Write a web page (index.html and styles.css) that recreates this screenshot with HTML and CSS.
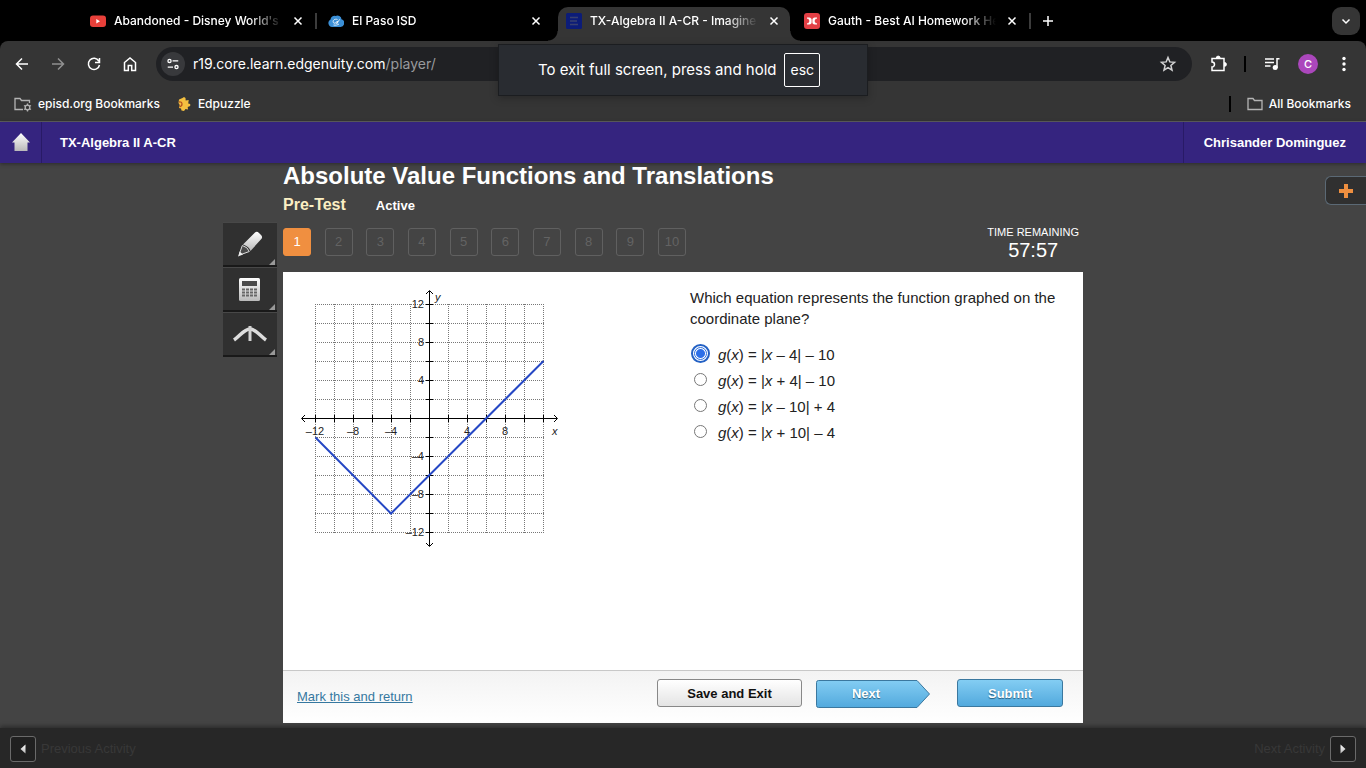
FILE: index.html
```html
<!DOCTYPE html>
<html lang="en">
<head>
<meta charset="utf-8">
<meta name="viewport" content="width=device-width, initial-scale=1">
<title>TX-Algebra II A-CR - Imagine Edgenuity</title>
<link rel="stylesheet" href="styles.css">
</head>
<body>
<header class="browser">
  <div class="tabs">
    <div class="tab tab-divided">
      <svg class="fav" viewBox="0 0 16 16"><rect y="2.500" width="16" height="11.500" rx="3" fill="#e8403a"/><path d="M6.300 6v4.600L10 8.300z" fill="#fff"/></svg>
      <span class="tab-title">Abandoned - Disney World's 2</span>
      <button class="tab-close" aria-label="Close tab"><svg viewBox="0 0 16 16"><path d="M4.500 4.500l7 7M11.500 4.500l-7 7"/></svg></button>
    </div>
    <div class="tab">
      <svg class="fav" viewBox="0 0 16 16"><path d="M4 14a4 4 0 0 1-1.500-7.500A4 4 0 0 1 7.500 3a4 4 0 0 1 6 3.200A4 4 0 0 1 12.500 14z" fill="#3b8fd6"/><path d="M9.500 6.500c-3-1-5 1-4.200 3 .6 1.400 2.700.8 4.200-1.500l-.8 2.800 3-4.500M5.500 12c2 .5 4 0 5.500-1" fill="none" stroke="#fff" stroke-width=".8"/></svg>
      <span class="tab-title">El Paso ISD</span>
      <button class="tab-close" aria-label="Close tab"><svg viewBox="0 0 16 16"><path d="M4.500 4.500l7 7M11.500 4.500l-7 7"/></svg></button>
    </div>
    <div class="tab tab-active">
      <svg class="fav" viewBox="0 0 16 16"><rect width="16" height="16" rx="1.500" fill="#0c1c78"/><path d="M4 4.500h8M4 8h7M4 11.500h8" fill="none" stroke="#39406f" stroke-width="1.500"/></svg>
      <span class="tab-title">TX-Algebra II A-CR - Imagine</span>
      <button class="tab-close" aria-label="Close tab"><svg viewBox="0 0 16 16"><path d="M4.500 4.500l7 7M11.500 4.500l-7 7"/></svg></button>
    </div>
    <div class="tab tab-divided">
      <svg class="fav" viewBox="0 0 16 16"><rect width="16" height="16" rx="3" fill="#e33f45"/><path d="M3 4.500h2.200C7 4.500 7.400 6.300 8 6.300s1-1.800 2.800-1.800H13v1.300h-1.300L10.500 8l1.200 2.200H13v1.300h-2.200C9 11.500 8.600 9.700 8 9.700s-1 1.800-2.800 1.800H3v-1.300h1.300L5.500 8 4.300 5.800H3z" fill="#fff"/><path d="M8 6v4" stroke="#e33f45" stroke-width=".8"/></svg>
      <span class="tab-title">Gauth - Best AI Homework He</span>
      <button class="tab-close" aria-label="Close tab"><svg viewBox="0 0 16 16"><path d="M4.500 4.500l7 7M11.500 4.500l-7 7"/></svg></button>
    </div>
    <button class="new-tab" aria-label="New tab"><svg viewBox="0 0 16 16"><path d="M8 3v10M3 8h10"/></svg></button>
    <button class="tab-search" aria-label="Search tabs"><svg viewBox="0 0 16 16"><path d="M4.500 6.500L8 10l3.500-3.500"/></svg></button>
  </div>

  <div class="toolbar">
    <button class="tool" aria-label="Back"><svg viewBox="0 0 20 20"><path d="M16 10H5M10 4.500L4.500 10l5.500 5.500"/></svg></button>
    <button class="tool tool-off" aria-label="Forward"><svg viewBox="0 0 20 20"><path d="M4 10h11M10 4.500l5.500 5.500-5.500 5.500"/></svg></button>
    <button class="tool" aria-label="Reload"><svg viewBox="0 0 20 20"><path d="M14.800 7A5.600 5.600 0 1 0 15.500 11M15.500 4v4.500H11"/></svg></button>
    <button class="tool" aria-label="Home"><svg viewBox="0 0 20 20"><path d="M4.500 8.500L10 4l5.500 4.500v8h-3.800v-5H8.300v5H4.500z"/></svg></button>
    <div class="address">
      <span class="site-info"><svg viewBox="0 0 16 16"><circle cx="4" cy="4.500" r="1.800"/><path d="M7.500 4.500H14M2 11.500h6"/><circle cx="12" cy="11.500" r="1.800"/></svg></span>
      <span class="url">r19.core.learn.edgenuity.com<span class="url-path">/player/</span></span>
      <button class="tool star" aria-label="Bookmark this tab"><svg viewBox="0 0 20 20"><path d="M10 3.500l1.800 4.400 4.700.4-3.600 3.100 1.100 4.700L10 13.600l-4 2.500 1.100-4.700-3.600-3.100 4.700-.4z"/></svg></button>
    </div>
    <button class="tool" aria-label="Extensions"><svg viewBox="0 0 20 20"><path d="M4 4.500h12v12H4v-3.500a2.300 2.300 0 0 0 0-5z"/><path d="M8.300 4a1.900 1.900 0 0 1 3.800 0zM16.500 8.500a1.900 1.900 0 0 1 0 3.800z" fill="#fff" stroke-width="1"/></svg></button>
    <span class="bar-divider"></span>
    <button class="tool" aria-label="Media controls"><svg viewBox="0 0 20 20"><path d="M3 5h9M3 8.500h9M3 12h5.500M15 14V4.800h2.500"/><circle cx="13.200" cy="13.500" r="2.500" fill="#fff" stroke="none"/></svg></button>
    <button class="avatar" aria-label="Profile">C</button>
    <button class="tool" aria-label="Menu"><svg viewBox="0 0 20 20"><g fill="#fff" stroke="none"><circle cx="10" cy="4.500" r="1.700"/><circle cx="10" cy="10" r="1.700"/><circle cx="10" cy="15.500" r="1.700"/></g></svg></button>
  </div>

  <nav class="bookmarks">
    <a class="bookmark" href="#"><svg class="folder-set" viewBox="0 0 18 16"><path d="M9 13.500H1v-11h5l1.500 2h8V7"/><circle cx="13.500" cy="11.500" r="2.300"/><path d="M13.500 7.500v1.700M13.500 13.800v1.700M10 9.500l1.500.8M15.500 12.700l1.500.8M10 13.500l1.500-.8M15.500 10.300l1.500-.8"/></svg>episd.org Bookmarks</a>
    <a class="bookmark" href="#"><svg class="puzzle" viewBox="0 0 16 16"><path d="M3 3.500L6.500 2 8 1l1.500 1 .2 2.500 3-.5-.5 3.500 2 .5v2l-2.500 1 .3 2.500-2.500-.5L8 15l-2.500-.5L5 12.500l-2-.5.700-3L2.500 7z" fill="#f4c040"/><path d="M3 6q3-.5 3 2t-2.500 2.500" fill="none" stroke="#b5531d" stroke-width="1.300"/></svg>Edpuzzle</a>
    <span class="bar-divider bar-divider-end"></span>
    <a class="bookmark" href="#"><svg class="folder" viewBox="0 0 16 16"><path d="M1 2.500h5l1.500 2H15v9H1z"/></svg>All Bookmarks</a>
  </nav>
  <div class="toast" role="status">To exit full screen, press and hold <kbd class="key">esc</kbd></div>
</header>

<div class="appbar">
  <a class="app-home" href="#" aria-label="Home"><svg viewBox="0 0 18 20"><defs><linearGradient id="silver" x2="0" y2="1"><stop stop-color="#fff"/><stop offset="1" stop-color="#b9b9b9"/></linearGradient></defs><path d="M9 0l9 9.500h-2.500V18h-13V9.500H0z" fill="url(#silver)"/></svg></a>
  <span class="app-course">TX-Algebra II A-CR</span>
  <a class="app-user" href="#">Chrisander Dominguez</a>
</div>

<main class="stage">
  <div class="tools">
    <button class="side-tool" aria-label="Highlighter"><svg viewBox="0 0 34 34"><path d="M22 5.500q2-1.500 4 .5l2 2q2 2 .3 4L17.500 24q-1-4.500-7.500-6.500z" fill="url(#silver)"/><path d="M9.300 18.500q5.500 1.500 7 6L8 27.500l-1.500-1z" fill="#4a4a4a" stroke="#ddd"/><path d="M5 29.500l1.700-5 3.300 3z" fill="#eee"/></svg></button>
    <button class="side-tool" aria-label="Calculator"><svg viewBox="0 0 34 34"><rect x="6" y="6" width="21" height="23" rx="1.500" fill="url(#silver)"/><rect x="9" y="9" width="15" height="5" fill="#4b4b4b"/><g stroke="#666" stroke-width="2" stroke-dasharray="3 1"><path d="M9 17.500h15M9 20.500h15M9 23.500h15"/></g></svg></button>
    <button class="side-tool" aria-label="Graphing tool"><svg viewBox="0 0 34 34"><path d="M1 23C7 19 11 12 17 12s10 7 16 11" fill="none" stroke="#ddd" stroke-width="3.500"/><path d="M17 9v15" stroke="#d2d2d2" stroke-width="3"/></svg></button>
  </div>

  <section class="lesson">
    <h1 class="lesson-title">Absolute Value Functions and Translations</h1>
    <div class="lesson-sub"><span class="lesson-type">Pre-Test</span><span class="lesson-state">Active</span></div>
    <div class="progress">
      <nav class="steps" aria-label="Questions">
        <button class="step step-current">1</button><button class="step">2</button><button class="step">3</button><button class="step">4</button><button class="step">5</button><button class="step">6</button><button class="step">7</button><button class="step">8</button><button class="step">9</button><button class="step">10</button>
      </nav>
      <div class="timer"><span class="timer-label">TIME REMAINING</span><span class="timer-value">57:57</span></div>
    </div>

    <div class="card">
      <div class="question">
        <svg class="graph" viewBox="297 286 266 266" role="img" aria-label="Graph of an absolute value function">
          <path class="grid" d="M315.500 304v229M334.500 304v229M353.500 304v229M372.500 304v229M391.500 304v229M410.500 304v229M448.500 304v229M467.500 304v229M486.500 304v229M505.500 304v229M524.500 304v229M543.500 304v229M315 304.500h229M315 323.500h229M315 342.500h229M315 361.500h229M315 380.500h229M315 399.500h229M315 437.500h229M315 456.500h229M315 475.500h229M315 494.500h229M315 513.500h229M315 532.500h229"/>
          <path class="axis" d="M302 418.500h255M429.500 291v255M426 304.500h7M426 323.500h7M426 342.500h7M426 361.500h7M426 380.500h7M426 399.500h7M426 437.500h7M426 456.500h7M426 475.500h7M426 494.500h7M426 513.500h7M426 532.500h7M315.500 415v7M334.500 415v7M353.500 415v7M372.500 415v7M391.500 415v7M410.500 415v7M448.500 415v7M467.500 415v7M486.500 415v7M505.500 415v7M524.500 415v7M543.500 415v7"/>
          <path class="axis" d="M305 415l-3.500 3.500 3.500 3.500M554 415l3.500 3.500-3.500 3.500M426 294l3.500-3.500 3.500 3.500M426 543l3.500 3.500 3.500-3.500"/>
          <g class="tick" text-anchor="end"><text x="424" y="308">12</text><text x="424" y="346">8</text><text x="424" y="384">4</text><text x="424" y="460">–4</text><text x="424" y="498">–8</text><text x="424" y="536">–12</text></g>
          <g class="tick" text-anchor="middle"><text x="315" y="435">–12</text><text x="353" y="435">–8</text><text x="391" y="435">–4</text><text x="467" y="435">4</text><text x="505" y="435">8</text></g>
          <g class="tick tick-name"><text x="435" y="301">y</text><text x="552" y="435">x</text></g>
          <path class="curve" d="M315.500 437.500L391 513.500 543.500 361"/>
        </svg>
        <form class="prompt">
          <p class="prompt-text">Which equation represents the function graphed on the coordinate plane?</p>
          <label class="option"><input type="radio" name="answer" checked><span><i>g</i>(<i>x</i>) = |<i>x</i> – 4| – 10</span></label>
          <label class="option"><input type="radio" name="answer"><span><i>g</i>(<i>x</i>) = |<i>x</i> + 4| – 10</span></label>
          <label class="option"><input type="radio" name="answer"><span><i>g</i>(<i>x</i>) = |<i>x</i> – 10| + 4</span></label>
          <label class="option"><input type="radio" name="answer"><span><i>g</i>(<i>x</i>) = |<i>x</i> + 10| – 4</span></label>
        </form>
      </div>
      <div class="actions">
        <a class="mark" href="#">Mark this and return</a>
        <button class="btn btn-save">Save and Exit</button>
        <button class="btn-next"><svg viewBox="0 0 114 28"><defs><linearGradient id="sky" x2="0" y2="1"><stop stop-color="#83cdf3"/><stop offset="1" stop-color="#52a9dd"/></linearGradient></defs><path d="M2.500.5H101l12.500 13.500L101 27.500H2.500q-2 0-2-2v-23q0-2 2-2z" fill="url(#sky)" stroke="#3b789f"/></svg><span>Next</span></button>
        <button class="btn btn-submit">Submit</button>
      </div>
    </div>
  </section>

  <button class="drawer" aria-label="Open panel"><svg viewBox="0 0 14 14"><path d="M5 0h4v5h5v4H9v5H5V9H0V5h5z" fill="#ee8f40"/></svg></button>
</main>

<footer class="pager">
  <button class="page-btn" id="prev" aria-label="Previous"><svg viewBox="0 0 8 10"><path d="M6.500.5v9L1.500 5z" fill="url(#silver)"/></svg></button>
  <label class="page-label" for="prev">Previous Activity</label>
  <label class="page-label page-label-end" for="next">Next Activity</label>
  <button class="page-btn" id="next" aria-label="Next"><svg viewBox="0 0 8 10"><path d="M1.500.5v9l5-4.500z" fill="url(#silver)"/></svg></button>
</footer>
</body>
</html>
```
FILE: styles.css
```css
* { box-sizing: border-box; }

body {
  margin: 0;
  min-height: 100vh;
  display: flex;
  flex-direction: column;
  background: #444;
  color: #fff;
  font: 13px/16px "Liberation Sans", Arial, sans-serif;
}

button {
  margin: 0;
  padding: 0;
  border: 0;
  background: none;
  color: inherit;
  font: inherit;
}

a { color: inherit; text-decoration: none; }
svg { display: block; flex: none; }

/* Browser frame */
.browser {
  position: relative;
  background: #000;
  font-family: Inter, sans-serif;
  font-weight: 500;
}

.browser button svg, .site-info svg { fill: none; stroke: #fff; stroke-width: 1.5; }

.tabs {
  height: 41px;
  display: flex;
  align-items: center;
  padding: 0 6px 0 80px;
  font-size: 12px;
}

.tab {
  position: relative;
  flex: 0 1 238px;
  min-width: 0;
  height: 34px;
  align-self: flex-end;
  display: flex;
  align-items: center;
  gap: 8px;
  padding: 0 12px 7px 10px;
}

.tab-divided::after {
  content: "";
  position: absolute;
  right: 1px;
  top: 6px;
  width: 2px;
  height: 16px;
  background: #3c3c3c;
}

.tab-active { z-index: 0; }

.tab-active::before {
  content: "";
  position: absolute;
  z-index: -1;
  inset: 0 4px 0 2px;
  border-radius: 10px 10px 0 0;
  background: #353535;
}

.tab-active::after {
  content: "";
  position: absolute;
  z-index: -1;
  inset: auto -6px 0 -8px;
  height: 10px;
  background:
    radial-gradient(circle at 0 0, #000 9px, #353535 10px) left / 10px 10px no-repeat,
    radial-gradient(circle at 100% 0, #000 9px, #353535 10px) right / 10px 10px no-repeat;
}

.fav, .tab-close svg, .new-tab svg, .tab-search svg { width: 16px; height: 16px; }

.tab-title {
  flex: 1;
  white-space: nowrap;
  min-width: 0;
  mask-image: linear-gradient(to left, transparent, #000 32px);
}

.new-tab { margin-left: 8px; }

.tab-search {
  margin-left: auto;
  padding: 6px;
  border-radius: 9px;
  background: #353535;
}

.toolbar {
  display: flex;
  align-items: center;
  gap: 16px;
  padding: 6px 12px;
  border-radius: 8px 8px 0 0;
  background: #353535;
}

.tool, .tool svg { width: 20px; height: 20px; }
.tool-off { opacity: 0.45; }

.address {
  flex: 1;
  min-width: 0;
  height: 34px;
  display: flex;
  align-items: center;
  gap: 8px;
  padding: 0 14px 0 5px;
  border-radius: 17px;
  background: #202124;
}

.site-info { padding: 5px; border-radius: 50%; background: #38393c; }
.site-info svg { width: 14px; height: 14px; }
.url { font-size: 14px; font-weight: 400; }
.url-path { color: #989a9d; }
.star { margin-left: auto; opacity: 0.8; }

.bar-divider { width: 2px; height: 16px; background: #000; }
.bar-divider-end { margin-left: auto; }

.avatar {
  width: 20px;
  height: 20px;
  border-radius: 50%;
  background: #ab47bc;
  font-size: 11px;
}

.bookmarks {
  height: 35px;
  display: flex;
  align-items: center;
  gap: 16px;
  padding: 0 15px 0 14px;
  border-bottom: 1px solid #606060;
  background: #353535;
  font-size: 12px;
}

.bookmark { display: flex; align-items: center; gap: 6px; }
.folder-set, .folder { height: 16px; fill: none; stroke: #b4b4b4; stroke-width: 1.3; }
.folder-set { width: 18px; }
.folder, .puzzle { width: 16px; height: 16px; }

.toast {
  position: absolute;
  top: 44px;
  left: 50%;
  width: 370px;
  height: 52px;
  display: flex;
  align-items: center;
  justify-content: center;
  gap: 8px;
  padding-right: 8px;
  transform: translateX(-50%);
  border: 1px solid #1b1d20;
  background: #292c31;
  box-shadow: 0 2px 8px #0004;
  font-size: 15px;
  font-weight: 400;
}

.key {
  padding: 8px 5px;
  border: 1px solid #fff;
  border-radius: 2px;
  font: inherit;
  font-size: 14px;
}

/* Course bar */
.appbar {
  position: relative;
  height: 41px;
  display: flex;
  align-items: center;
  background: #35247f;
  box-shadow: 0 1px 4px #0006;
  font-weight: bold;
}

.app-home {
  height: 41px;
  display: flex;
  align-items: center;
  padding: 0 11px 0 12px;
  border-right: 1px solid #281a66;
}

.app-home svg { width: 18px; height: 20px; }
.app-course { padding-left: 18px; }

.app-user {
  margin-left: auto;
  padding: 13px 20px 12px;
  border-left: 1px solid #281a66;
}

/* Lesson */
.stage {
  flex: 1;
  display: grid;
  grid-template-columns: 1fr minmax(0, 800px) 1fr;
  padding-bottom: 5px;
  background: #444;
}

.tools { justify-self: end; padding: 59px 6px 0 0; }

.side-tool {
  position: relative;
  width: 54px;
  height: 45px;
  display: grid;
  place-items: center;
  border-bottom: 2px solid #191919;
  border-top: 1px solid #484848;
  background: #303030;
}

.side-tool svg { width: 34px; height: 34px; }

.side-tool::after {
  content: "";
  position: absolute;
  right: 2px;
  bottom: 0;
  border: 3px solid transparent;
  border-right-color: #999;
  border-bottom-color: #999;
}

.lesson { display: flex; flex-direction: column; }
.lesson-title { margin: 0; font-size: 24px; line-height: 26px; }

.lesson-sub {
  display: flex;
  align-items: baseline;
  gap: 30px;
  padding-top: 6px;
  font-weight: bold;
  line-height: 20px;
}

.lesson-type { color: #fbefc3; font-size: 16px; }

.progress {
  display: flex;
  align-items: flex-start;
  justify-content: space-between;
  padding: 8px 4px 11px 0;
}

.steps {
  flex: 0 1 403px;
  display: flex;
  justify-content: space-between;
  padding-top: 4px;
}

.step {
  width: 28px;
  height: 28px;
  border: 1px solid #606060;
  border-radius: 3px;
  color: #636363;
}

.step-current { border-color: #f08f40; background: #f08f40; color: #fff; }
.timer { display: flex; flex-direction: column; align-items: center; }
.timer-label { font-size: 11px; }
.timer-value { font-size: 20px; line-height: 21px; }

.card {
  flex: 1;
  display: flex;
  flex-direction: column;
  background: #fff;
  color: #222;
}

.question {
  flex: 1;
  display: grid;
  grid-template-columns: 393px 1fr;
  align-items: start;
  padding: 14px 20px 0 14px;
  font-size: 15px;
  line-height: 21px;
}

.graph { width: 266px; height: 266px; }
.grid, .axis, .curve { fill: none; }
.grid { stroke: #777; stroke-dasharray: 1 1; }
.axis { stroke: #000; }
.curve { stroke: #2547c4; stroke-width: 2; }
.tick { fill: #222; font-size: 11px; }
.tick-name { font-style: italic; }

.prompt-text { margin: 0; padding: 1px 0 12px; }

.option {
  height: 26px;
  display: flex;
  align-items: center;
  gap: 11px;
  padding-left: 4px;
}

.option input {
  appearance: none;
  width: 13px;
  height: 13px;
  margin: 0 0 1px;
  border: 1px solid #777;
  border-radius: 50%;
  background: #fff;
}

.option input:checked {
  border-color: #2c6fe0;
  background: radial-gradient(circle, #2c6fe8 4px, #fff 5px);
  box-shadow: 0 0 0 1px #fff;
  outline: 2px solid #2361c4;
  outline-offset: 1px;
}

.actions {
  height: 53px;
  display: flex;
  align-items: flex-start;
  padding: 8px 20px 0 14px;
  border-top: 1px solid #c8c8c8;
  background: linear-gradient(#f3f3f3, #fff);
}

.mark {
  margin: 10px auto 0 0;
  color: #3678a0;
  text-decoration: underline;
}

.btn {
  height: 28px;
  padding-top: 2px;
  border: 1px solid #888;
  border-radius: 3px;
  font-weight: bold;
}

.btn-save {
  width: 145px;
  margin-right: 14px;
  background: linear-gradient(#fff, #e4e4e4);
  color: #111;
}

.btn-next {
  width: 114px;
  height: 28px;
  display: grid;
  margin: 1px 27px 0 0;
  align-items: center;
  color: #fff;
  font-weight: bold;
  text-shadow: 0 1px 1px #285c7c;
}

.btn-next svg, .btn-next span { grid-area: 1 / 1; }
.btn-next svg { width: 114px; height: 28px; }
.btn-next span { padding-right: 14px; }

.btn-submit {
  width: 106px;
  border-color: #3b789f;
  background: linear-gradient(#83cdf3, #52a9dd);
  color: #fff;
  text-shadow: 0 1px 1px #285c7c;
}

.drawer {
  justify-self: end;
  width: 41px;
  height: 29px;
  display: grid;
  place-items: center;
  margin-top: 13px;
  border: 1px solid #5b6975;
  border-right: 0;
  border-radius: 6px 0 0 6px;
  background: #303030;
}

.drawer svg { width: 14px; height: 14px; }

/* Bottom bar */
.pager {
  height: 40px;
  display: flex;
  align-items: center;
  gap: 5px;
  padding: 2px 10px 0;
  background: #272727;
  box-shadow: 0 -2px 4px #0005;
}

.page-btn {
  width: 26px;
  height: 26px;
  display: grid;
  place-items: center;
  border: 1px solid #6a6a6a;
  border-radius: 3px;
  background: #202020;
}

.page-btn svg { width: 8px; height: 10px; }
.page-label { color: #383838; }
.page-label-end { margin-left: auto; }
```
